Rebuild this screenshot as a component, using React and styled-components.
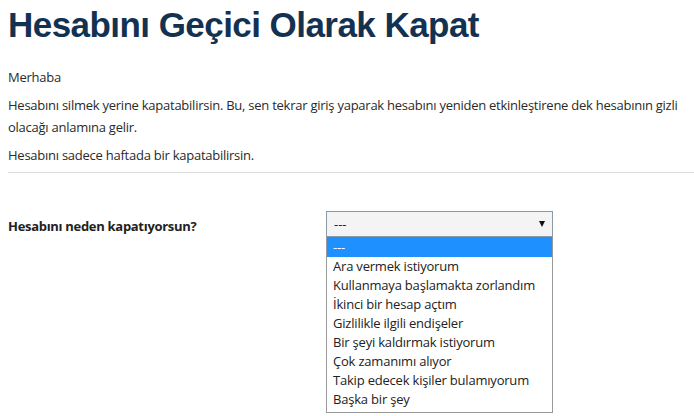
import React from "react";
import styled, { createGlobalStyle } from "styled-components";

const Global = createGlobalStyle`
  html, body { margin: 0; padding: 0; background: #fff; }
  body { font-family: "Open Sans", "Noto Sans", sans-serif; color: #222; }
`;

const Page = styled.div`
  padding: 0 8px;
  width: 694px;
  box-sizing: border-box;
`;

const Title = styled.h1`
  margin: 0;
  padding-top: 3px;
  font-family: "Liberation Sans", Arial, sans-serif;
  font-weight: bold;
  font-size: 35px;
  letter-spacing: -0.55px;
  line-height: 44px;
  color: #133252;
`;

const Para = styled.p`
  margin: ${(p) => p.$mt || 0}px 0 0 0;
  font-size: 13px;
  letter-spacing: -0.25px;
  line-height: 22px;
  color: #2a2a2a;
`;

const Rule = styled.hr`
  margin: 6px 0 0 0;
  border: 0;
  border-top: 1px solid #dcdcdc;
  width: 686px;
`;

const Row = styled.div`
  display: flex;
  align-items: flex-start;
  margin-top: 38px;
`;

const Label = styled.label`
  width: 318px;
  padding-top: 6px;
  font-size: 13px;
  letter-spacing: -0.3px;
  font-weight: bold;
  color: #222;
`;

const SelectWrap = styled.div`
  position: relative;
  width: 227px;
  height: 202px;
`;

const SelectBox = styled.div`
  height: 26px;
  box-sizing: border-box;
  border: 1px solid #8a9aa8;
  background: #f4f4f4;
  display: flex;
  align-items: center;
  justify-content: space-between;
  padding: 0 7px 0 7px;
  font-size: 13px;
`;

const Arrow = styled.span`
  width: 0;
  height: 0;
  border-left: 3.5px solid transparent;
  border-right: 3.5px solid transparent;
  border-top: 6px solid #111;
`;

const List = styled.ul`
  position: absolute;
  z-index: 10;
  left: 0;
  top: 26px;
  width: 227px;
  box-sizing: border-box;
  margin: 0;
  padding: 0 0 3px 0;
  list-style: none;
  border: 1px solid #9a9a9a;
  border-top: 0;
  background: #fff;
`;

const Item = styled.li`
  height: ${(p) => (p.$selected ? 20 : 19)}px;
  line-height: ${(p) => (p.$selected ? 20 : 19)}px;
  padding-left: 6px;
  font-size: 13px;
  letter-spacing: -0.2px;
  color: ${(p) => (p.$selected ? "#fff" : "#222")};
  background: ${(p) => (p.$selected ? "#1e90ff" : "transparent")};
`;

const options = [
  "---",
  "Ara vermek istiyorum",
  "Kullanmaya başlamakta zorlandım",
  "İkinci bir hesap açtım",
  "Gizlilikle ilgili endişeler",
  "Bir şeyi kaldırmak istiyorum",
  "Çok zamanımı alıyor",
  "Takip edecek kişiler bulamıyorum",
  "Başka bir şey",
];

export default function App() {
  return (
    <Page>
      <Global />
      <Title>Hesabını Geçici Olarak Kapat</Title>
      <Para $mt={19}>Merhaba</Para>
      <Para $mt={6}>
        Hesabını silmek yerine kapatabilirsin. Bu, sen tekrar giriş yaparak hesabını yeniden etkinleştirene dek hesabının gizli olacağı anlamına gelir.
      </Para>
      <Para $mt={6}>Hesabını sadece haftada bir kapatabilirsin.</Para>
      <Rule />
      <Row>
        <Label>Hesabını neden kapatıyorsun?</Label>
        <SelectWrap>
          <SelectBox>
            <span>---</span>
            <Arrow />
          </SelectBox>
          <List>
            {options.map((o, i) => (
              <Item key={o} $selected={i === 0}>{o}</Item>
            ))}
          </List>
        </SelectWrap>
      </Row>
    </Page>
  );
}
